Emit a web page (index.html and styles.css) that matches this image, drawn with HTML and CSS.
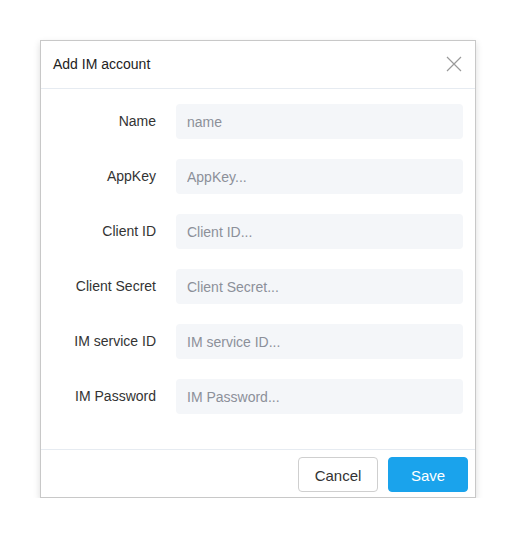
FILE: index.html
```html
<!DOCTYPE html>
<html>
<head>
<meta charset="utf-8">
<link rel="stylesheet" href="styles.css">
</head>
<body>
<div class="dialog">
  <div class="dialog-header">
    <span class="dialog-title">Add IM account</span>
    <svg class="close" width="16" height="16" viewBox="0 0 16 16"><path d="M1 1L15 15M15 1L1 15" stroke="#9a9a9a" stroke-width="1.2" fill="none"/></svg>
  </div>
  <div class="dialog-body">
    <div class="row"><label class="label">Name</label><input class="field" placeholder="name"></div>
    <div class="row"><label class="label">AppKey</label><input class="field" placeholder="AppKey..."></div>
    <div class="row"><label class="label">Client ID</label><input class="field" placeholder="Client ID..."></div>
    <div class="row"><label class="label">Client Secret</label><input class="field" placeholder="Client Secret..."></div>
    <div class="row"><label class="label">IM service ID</label><input class="field" placeholder="IM service ID..."></div>
    <div class="row"><label class="label">IM Password</label><input class="field" placeholder="IM Password..."></div>
  </div>
  <div class="dialog-footer">
    <button class="btn btn-cancel">Cancel</button>
    <button class="btn btn-save">Save</button>
  </div>
</div>
</body>
</html>
```
FILE: styles.css
```css
html, body {
  margin: 0;
  padding: 0;
  background: #ffffff;
  font-family: "Liberation Sans", Arial, sans-serif;
}
body {
  padding: 40px 0 0 40px;
}
.dialog {
  width: 434px;
  border: 1px solid #c8c8c8;
  background: #fff;
  box-shadow: 0 3px 7px rgba(0,0,0,0.14);
}
.dialog-header {
  height: 47px;
  border-bottom: 1px solid #e6ebf1;
  display: flex;
  align-items: center;
  justify-content: space-between;
  padding: 0 13px 0 12px;
}
.dialog-title {
  font-size: 14px;
  color: #222;
  margin-top: -2px;
}
.close {
  display: block;
  margin-top: -1px;
}
.dialog-body {
  padding: 15px 12px 35px 0;
  display: flex;
  flex-direction: column;
  gap: 20px;
  border-bottom: 1px solid #e6ebf1;
}
.row {
  display: flex;
  align-items: center;
  gap: 20px;
}
.label {
  width: 115px;
  text-align: right;
  font-size: 14px;
  color: #333;
  margin-top: -1px;
}
.field {
  flex: 1;
  height: 35px;
  box-sizing: border-box;
  border: none;
  border-radius: 4px;
  background: #f4f6f9;
  padding: 0 11px;
  font-family: "Liberation Sans", Arial, sans-serif;
  font-size: 14px;
  color: #333;
  outline: none;
}
.field::placeholder {
  color: #8c9099;
}
.dialog-footer {
  height: 47px;
  display: flex;
  justify-content: flex-end;
  align-items: flex-start;
  padding: 7px 7px 0 0;
  box-sizing: border-box;
  gap: 10px;
}
.btn {
  width: 80px;
  height: 35px;
  padding-top: 2px;
  border-radius: 4px;
  font-family: "Liberation Sans", Arial, sans-serif;
  font-size: 15px;
  cursor: pointer;
}
.btn-cancel {
  background: #fff;
  border: 1px solid #cfcfcf;
  color: #333;
}
.btn-save {
  background: #1aa3ec;
  border: 1px solid #1aa3ec;
  color: #fff;
}
```
